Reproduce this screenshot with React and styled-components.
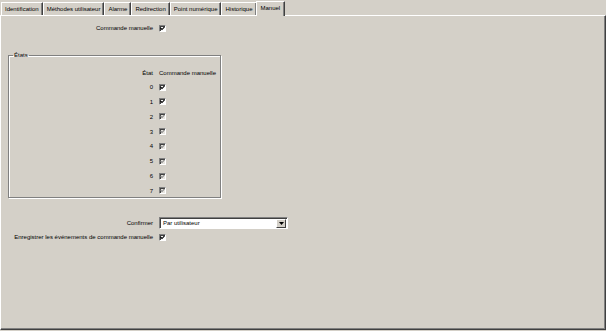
import styled, { createGlobalStyle } from 'styled-components';

const GlobalStyle = createGlobalStyle`
  html, body {
    margin: 0;
    padding: 0;
    background: #d4d0c8;
  }
  body {
    font-family: "Liberation Sans", Arial, sans-serif;
    font-size: 6px;
    color: #000;
  }
`;

const TABS = [
  'Identification',
  'Méthodes utilisateur',
  'Alarme',
  'Redirection',
  'Point numérique',
  'Historique',
  'Manuel',
];

function Checkbox({ disabled = false }) {
  return (
    <Box $disabled={disabled}>
      <svg width="5" height="5" viewBox="0 0 5 5">
        <path
          d="M0.5 2 L2 3.5 L4.5 0.8"
          fill="none"
          stroke={disabled ? '#8a8a8a' : '#000'}
          strokeWidth="1.1"
        />
      </svg>
    </Box>
  );
}

function App() {
  const states = [0, 1, 2, 3, 4, 5, 6, 7];

  return (
    <>
      <GlobalStyle />
      <Screen>
        <TabStrip>
          {TABS.map((tab) => (
            <Tab key={tab} $active={tab === 'Manuel'}>
              {tab}
            </Tab>
          ))}
        </TabStrip>
        <Panel>
          <Row $labelWidth={152} $top={7}>
            <Label>Commande manuelle</Label>
            <Checkbox />
          </Row>

          <Group>
            <Legend>États</Legend>
            <Row $labelWidth={144} $top={10}>
              <Label>État</Label>
              <span>Commande manuelle</span>
            </Row>
            <StateList>
              {states.map((s) => (
                <Row key={s} $labelWidth={144}>
                  <Label>{s}</Label>
                  <Checkbox disabled={s > 1} />
                </Row>
              ))}
            </StateList>
          </Group>

          <Row $labelWidth={152} $top={19}>
            <Label>Confirmer</Label>
            <Select>
              <SelectText>Par utilisateur</SelectText>
              <DropButton>
                <svg width="5" height="3" viewBox="0 0 5 3">
                  <path d="M0 0 H5 L2.5 3 Z" fill="#000" />
                </svg>
              </DropButton>
            </Select>
          </Row>
          <Row $labelWidth={152} $top={5}>
            <Label>Enregistrer les événements de commande manuelle</Label>
            <Checkbox />
          </Row>
        </Panel>
      </Screen>
    </>
  );
}

export default App;

const Screen = styled.div`
  width: 606px;
  height: 331px;
  overflow: hidden;
`;

const TabStrip = styled.div`
  display: flex;
  align-items: flex-end;
  height: 15px;
  padding-left: 1px;
  position: relative;
  z-index: 1;
`;

const Tab = styled.div`
  box-sizing: border-box;
  height: ${(p) => (p.$active ? '15px' : '13px')};
  margin: ${(p) => (p.$active ? '0 -1px -1px -1px' : '0')};
  padding: 0 ${(p) => (p.$active ? '4px' : '3px')};
  display: flex;
  align-items: center;
  border-top: 1px solid #fff;
  border-left: 1px solid #fff;
  border-right: 1px solid #404040;
  box-shadow: inset -1px 0 0 #808080;
  background: #d4d0c8;
  white-space: nowrap;
  line-height: 1;
  padding-bottom: ${(p) => (p.$active ? '2px' : '0')};
`;

const Panel = styled.div`
  box-sizing: border-box;
  width: 606px;
  height: 315px;
  border-top: 1px solid #fff;
  border-left: 1px solid #fff;
  border-right: 1px solid #404040;
  border-bottom: 1px solid #404040;
  box-shadow: inset -1px -1px 0 #808080;
  display: flex;
  flex-direction: column;
`;

const Row = styled.div`
  display: grid;
  grid-template-columns: ${(p) => p.$labelWidth}px 1fr;
  column-gap: 6px;
  align-items: center;
  height: 10px;
  margin-top: ${(p) => p.$top || 0}px;
  white-space: nowrap;
`;

const Label = styled.span`
  text-align: right;
`;

const Box = styled.span`
  box-sizing: border-box;
  width: 7px;
  height: 7px;
  display: flex;
  align-items: center;
  justify-content: center;
  background: ${(p) => (p.$disabled ? '#e8e6e1' : '#fff')};
  border-top: 1px solid #808080;
  border-left: 1px solid #808080;
  border-right: 1px solid #fff;
  border-bottom: 1px solid #fff;
  box-shadow: inset 1px 1px 0 #404040;
`;

const Group = styled.fieldset`
  box-sizing: border-box;
  width: 213px;
  height: 146px;
  margin: 19px 0 0 7px;
  padding: 0;
  border: 1px solid #808080;
  box-shadow: 1px 1px 0 #fff, inset 1px 1px 0 #fff;
  min-inline-size: 0;
`;

const Legend = styled.legend`
  padding: 0 1px;
  margin-left: 4px;
  line-height: 1;
  color: #000;
`;

const StateList = styled.div`
  display: flex;
  flex-direction: column;
  gap: 4.85px;
  margin-top: 4px;
`;

const Select = styled.div`
  box-sizing: border-box;
  width: 129px;
  height: 12px;
  display: flex;
  align-items: center;
  background: #fff;
  border-top: 1px solid #808080;
  border-left: 1px solid #808080;
  border-right: 1px solid #fff;
  border-bottom: 1px solid #fff;
  box-shadow: inset 1px 1px 0 #404040;
  padding: 1px;
`;

const SelectText = styled.span`
  flex: 1;
  padding-left: 2px;
`;

const DropButton = styled.span`
  box-sizing: border-box;
  width: 10px;
  height: 9px;
  display: flex;
  align-items: center;
  justify-content: center;
  background: #d4d0c8;
  border-top: 1px solid #fff;
  border-left: 1px solid #fff;
  border-right: 1px solid #404040;
  border-bottom: 1px solid #404040;
`;
